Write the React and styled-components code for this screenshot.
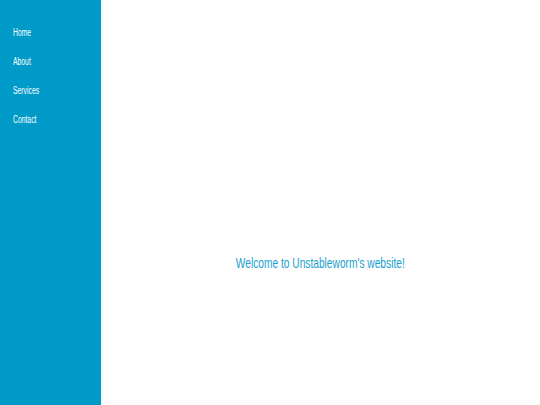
import React from 'react';
import styled, { createGlobalStyle } from 'styled-components';

const GlobalStyle = createGlobalStyle`
    html, body {
        margin: 0;
        padding: 0;
        height: 100%;
    }
    body {
        font-family: 'Liberation Sans', Arial, sans-serif;
    }
    #root {
        height: 100%;
    }
`;

const Page = styled.div`
    display: flex;
    height: 405px;
    background-color: #ffffff;
`;

const Sidebar = styled.nav`
    width: 101px;
    flex-shrink: 0;
    background-color: #009ac9;
    padding-top: 26px;
    box-sizing: border-box;
`;

const NavList = styled.ul`
    list-style: none;
    margin: 0;
    padding: 0 0 0 13px;
    display: flex;
    flex-direction: column;
    gap: 16px;
`;

const NavItem = styled.li`
    display: flex;
    font-size: 10px;
    line-height: 13px;
    height: 13px;
`;

/* the reference uses a condensed face; squeeze Liberation Sans to match */
const NavLink = styled.a`
    display: block;
    color: #ffffff;
    font-size: 10px;
    line-height: 13px;
    text-decoration: none;
    cursor: pointer;
    transform: scaleX(0.68);
    transform-origin: left center;
`;

const Main = styled.main`
    flex: 1;
    display: flex;
    justify-content: center;
    padding-top: 254px;
    box-sizing: border-box;
`;

const Welcome = styled.h1`
    margin: 0;
    font-size: 15px;
    font-weight: normal;
    line-height: 18px;
    color: #1a9fd0;
    white-space: nowrap;
    transform: scaleX(0.68);
    transform-origin: center;
`;

const links = ['Home', 'About', 'Services', 'Contact'];

function App() {
    return (
        <>
            <GlobalStyle />
            <Page>
                <Sidebar>
                    <NavList>
                        {links.map(link => (
                            <NavItem key={link}>
                                <NavLink>{link}</NavLink>
                            </NavItem>
                        ))}
                    </NavList>
                </Sidebar>
                <Main>
                    <Welcome>Welcome to Unstableworm's website!</Welcome>
                </Main>
            </Page>
        </>
    );
}

export default App;
